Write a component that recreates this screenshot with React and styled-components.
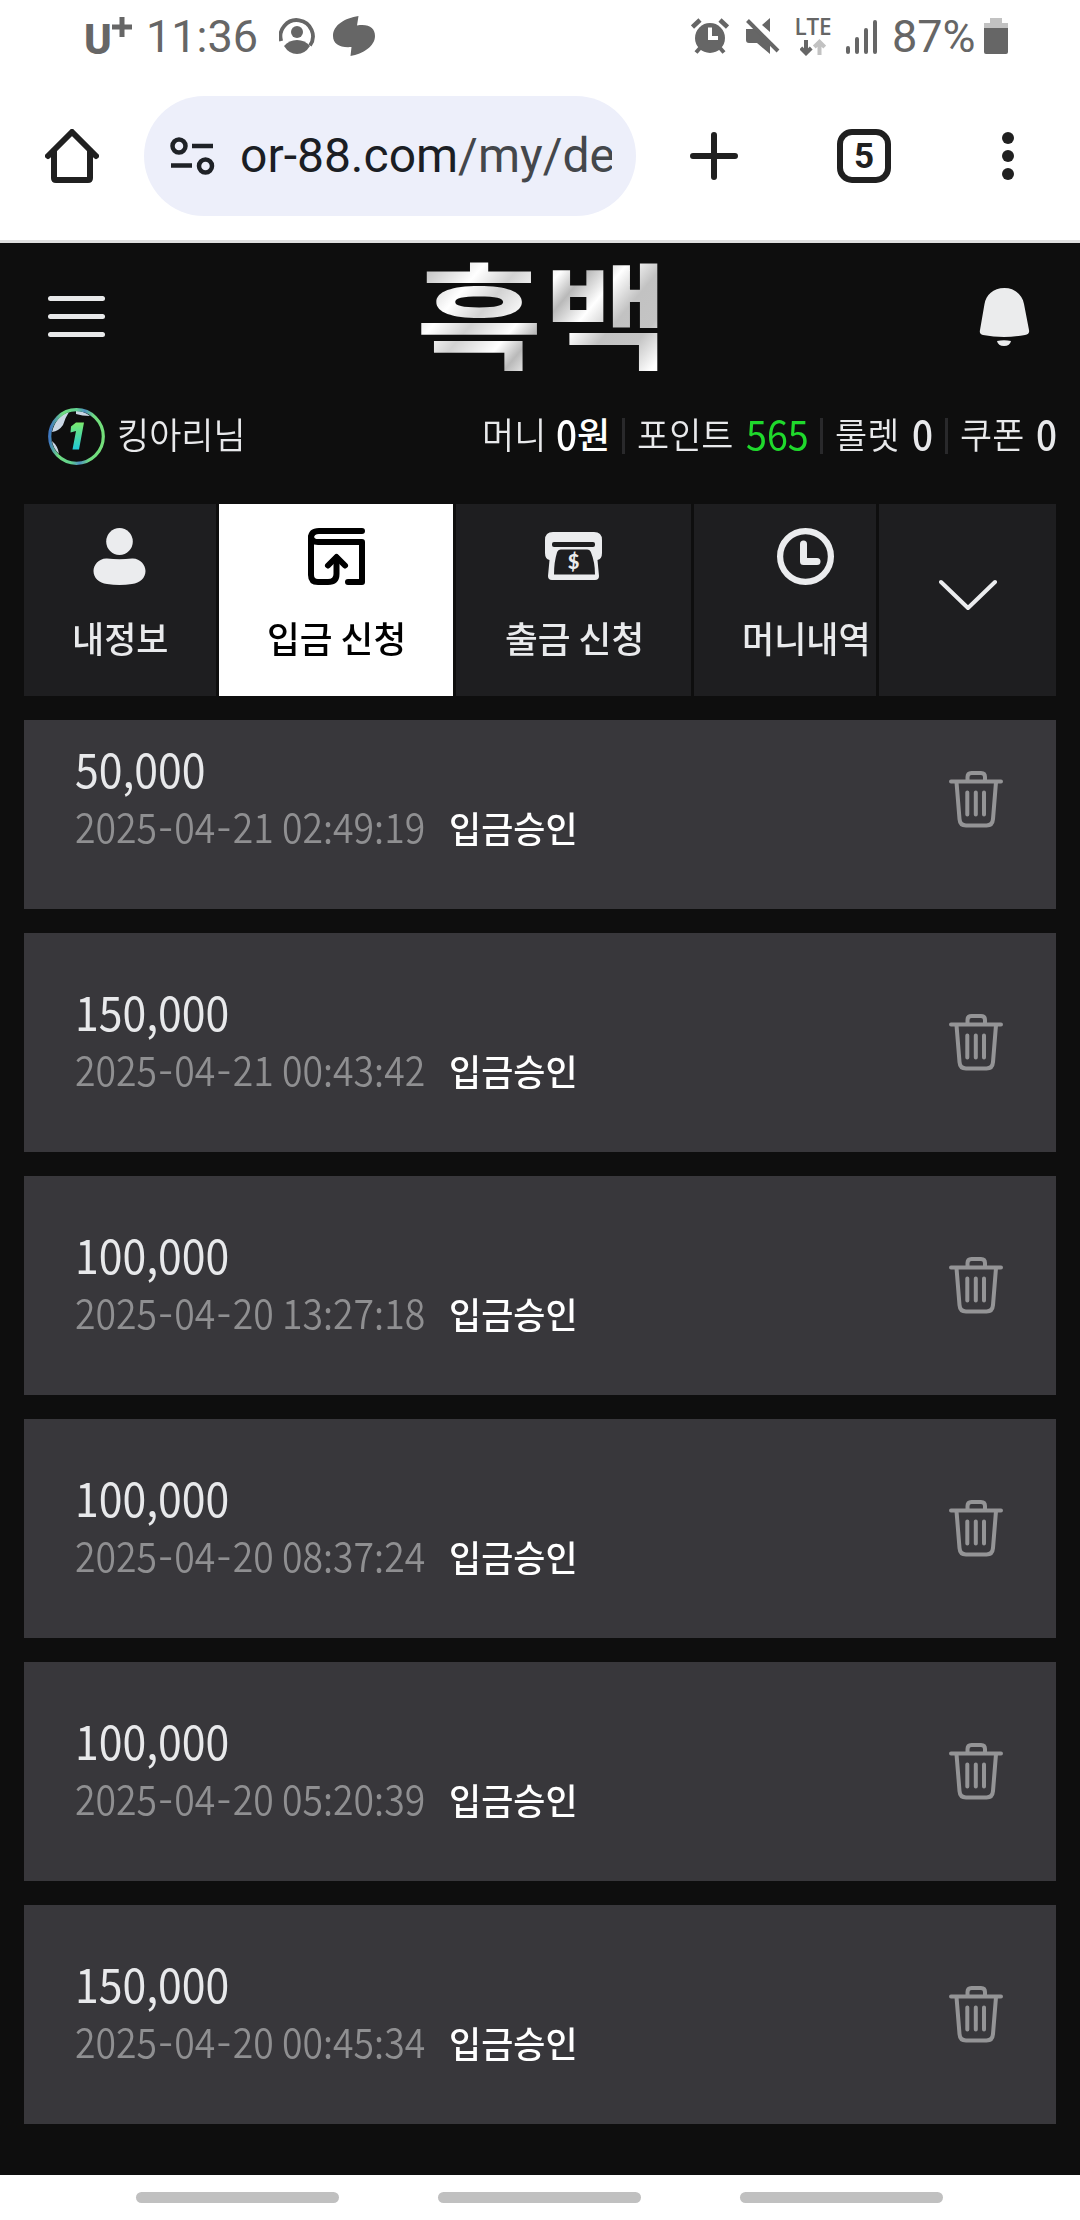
import React from "react";
import styled, { createGlobalStyle } from "styled-components";

const Global = createGlobalStyle`
  * { box-sizing: border-box; }
  body { margin: 0; background: #fff; }
`;

const KR = `"Noto Sans CJK KR", sans-serif`;

const Screen = styled.div`
  width: 1080px;
  height: 2220px;
  display: flex;
  flex-direction: column;
  background: #fff;
  overflow: hidden;
  font-family: ${KR};
`;

/* ---------- status bar ---------- */
const StatusBar = styled.header`
  height: 80px;
  display: flex;
  justify-content: space-between;
  align-items: flex-start;
  padding: 14px 72px 0 84px;
  color: #666;
  font-family: Roboto, sans-serif;
`;
const StatusGroup = styled.div`
  display: flex;
  align-items: flex-start;
  height: 46px;
`;
const Carrier = styled.div`
  display: flex;
  width: 48px;
  margin-right: 14px;
  font: 800 42px/46px Roboto, sans-serif;
  padding-top: 3px;
`;
const StatusText = styled.span`
  display: block;
  width: ${(p) => p.$w}px;
  margin-left: ${(p) => p.$ml || 0}px;
  font-size: 45px;
  line-height: 46px;
  white-space: nowrap;
`;
const NetStack = styled.div`
  display: flex;
  flex-direction: column;
  align-items: center;
  width: 36px;
  margin-left: 15px;
  font: 600 22.5px/22px "Open Sans", sans-serif;
  padding-top: 2px;
  letter-spacing: -0.2px;
`;
const Icon = styled.svg`
  display: block;
  flex: none;
  margin-left: ${(p) => p.$ml || 0}px;
  margin-top: ${(p) => p.$mt || 0}px;
`;

/* ---------- browser toolbar ---------- */
const Toolbar = styled.div`
  height: 163px;
  border-bottom: 3px solid #dedfde;
  display: flex;
  align-items: flex-start;
  padding: 16px 42px 0 42px;
`;
const ToolButton = styled.div`
  flex: none;
  height: 120px;
  width: 60px;
  display: flex;
  align-items: center;
  justify-content: center;
  margin-left: ${(p) => p.$ml || 0}px;
`;
const UrlPill = styled.div`
  flex: none;
  width: 492px;
  height: 120px;
  margin-left: 42px;
  border-radius: 60px;
  background: #edeffa;
  display: flex;
  align-items: center;
  padding: 0 24px 0 26px;
`;
const UrlText = styled.div`
  flex: 1;
  margin-left: 25px;
  overflow: hidden;
  white-space: nowrap;
  font: 400 48px/60px Roboto, sans-serif;
  color: #1b1e24;
  span { color: #44474b; }
`;
const TabCount = styled.div`
  width: 54px;
  height: 54px;
  border: 6px solid #202020;
  border-radius: 15px;
  font: 700 35px/43px Roboto, sans-serif;
  color: #202020;
  text-align: center;
`;

/* ---------- site ---------- */
const Site = styled.main`
  height: 1932px;
  background: #0e0e0e;
  overflow: hidden;
  color: #e8e9eb;
  display: flex;
  flex-direction: column;
`;
const SiteHeader = styled.div`
  height: 147px;
  display: flex;
  justify-content: space-between;
  align-items: center;
  padding: 0 48px;
`;
const Burger = styled.div`
  width: 57px;
  display: flex;
  flex-direction: column;
  gap: 13px;
  i { height: 5px; border-radius: 3px; background: #e8e9ea; }
`;
const Logo = styled.h1`
  margin: 0 0 12px 6px;
  padding: 0 4px;
  text-align: center;
  font: 700 115px/133px ${KR};
  white-space: nowrap;
  color: transparent;
  transform: scaleX(1.2);
  background: linear-gradient(125deg, #c4c4c4 10%, #fff 24%, #d2d2d2 34%, #fff 46%, #b9b9b9 53%, #fff 62%, #c2c2c2 72%, #c4c4c4 82%, #fff 92%);
  -webkit-background-clip: text;
  background-clip: text;
`;
const UserRow = styled.div`
  height: 114px;
  padding: 18px 24px 0 48px;
  display: flex;
  align-items: flex-start;
`;
const Fit = styled.span`
  display: block;
  flex: none;
  width: ${(p) => p.$w}px;
  margin-left: ${(p) => p.$ml || 0}px;
  margin-top: ${(p) => p.$mt || 0}px;
  font-size: ${(p) => p.$size || 36}px;
  font-weight: ${(p) => p.$weight || 400};
  line-height: 50px;
  color: ${(p) => p.$color || "inherit"};
  white-space: nowrap;
  transform: scaleX(${(p) => p.$sx || 0.97});
  transform-origin: 0 50%;
`;
const Stats = styled.div`
  display: flex;
  margin-left: auto;
  width: 573px;
`;
const Divider = styled.i`
  flex: none;
  width: 3px;
  height: 36px;
  margin: 10px 0 0 ${(p) => p.$ml}px;
  background: #29292b;
`;

const TabBar = styled.nav`
  height: 192px;
  margin: 0 24px;
  display: flex;
  gap: 3px;
`;
const Tab = styled.div`
  flex: none;
  width: ${(p) => p.$w}px;
  height: 192px;
  padding: 24px 0 0 ${(p) => p.$pad || 0}px;
  overflow: hidden;
  background: ${(p) => (p.$active ? "#fff" : "#1e1e20")};
  color: ${(p) => (p.$active ? "#000" : "#e9eaec")};
  display: flex;
  flex-direction: column;
  align-items: ${(p) => (p.$pad ? "flex-start" : "center")};
`;
const TabIcon = styled.div`
  height: 57px;
  width: 57px;
  margin-left: ${(p) => p.$ml || 0}px;
  margin-bottom: 27px;
`;
const MoreTab = styled(Tab)`
  padding: 0;
  justify-content: center;
`;

const List = styled.section`
  flex: 1;
  margin: 24px 24px 0;
  overflow: hidden;
`;
const Card = styled.article`
  height: 219px;
  margin-top: ${(p) => (p.$first ? -30 : 24)}px;
  padding: 53px 53px 0 51px;
  background: #38373b;
  display: flex;
  justify-content: space-between;
`;
const CardLine = styled.div`
  display: flex;
  height: ${(p) => p.$h}px;
`;
const Dash = styled.span`
  display: inline-block;
  width: 19px;
  text-align: center;
  transform: translateY(-2px) scaleX(1.15);
`;

const NavBar = styled.footer`
  height: 45px;
  display: flex;
  gap: 99px;
  padding: 17px 0 0 136px;
  i { width: 203px; height: 11px; border-radius: 6px; background: #c0c0c0; }
`;

const Trash = () => (
  <Icon width="54" height="58" viewBox="0 0 54 58" $mt={27} fill="none" stroke="#949496" strokeWidth="4" strokeLinecap="round" strokeLinejoin="round">
    <path d="M2 11.5H52" />
    <path d="M18.5 11V7Q18.5 3 22.500 3H32Q36 3 36 7V11" />
    <path d="M7.500 12L10.500 49Q11 55.500 17 55.500H37.500Q43.500 55.500 44 49L47 12" />
    <path d="M18.300 22.500V44.500M26.800 22.500V44.500M35 22.500V44.500" />
  </Icon>
);

const Stamp = ({ value }) => {
  const [y, m, rest] = value.split("-");
  return (
    <Fit $w={374} $size={41} $sx={0.911} $weight={350} $color="#8f8f91">
      {y}<Dash>-</Dash>{m}<Dash>-</Dash>{rest}
    </Fit>
  );
};

const rows = [
  ["50,000", "2025-04-21 02:49:19"],
  ["150,000", "2025-04-21 00:43:42"],
  ["100,000", "2025-04-20 13:27:18"],
  ["100,000", "2025-04-20 08:37:24"],
  ["100,000", "2025-04-20 05:20:39"],
  ["150,000", "2025-04-20 00:45:34"],
];

export default function App() {
  return (
    <Screen>
      <Global />
      <StatusBar>
        <StatusGroup>
          <Carrier>
            U
            <Icon width="20" height="20" viewBox="0 0 20 20" fill="none" stroke="#666" strokeWidth="5"><path d="M10 0V20M0 10H20" /></Icon>
          </Carrier>
          <StatusText $w={133}>11:36</StatusText>
          <Icon width="36" height="36" viewBox="0 0 36 36" $mt={4}>
            <path d="M2.200 23A16.200 16.200 0 1 1 31 27.500" fill="none" stroke="#666" strokeWidth="3.800" />
            <circle cx="18" cy="14" r="6" fill="#666" />
            <path d="M5 28Q10 22 18 22T31 28Q26 36 18 36T5 28Z" fill="#666" />
          </Icon>
          <Icon width="42" height="40" viewBox="0 0 42 40" $ml={18} $mt={2} fill="#666">
            <path d="M25.500 0L24 9.500C36 7.500 42 12 42 20C42 30 30 38 17.500 40L18.500 31C7 32 0 28 0 20C0 9 12 2 25.500 0Z" />
          </Icon>
        </StatusGroup>
        <StatusGroup>
          <Icon width="38" height="36" viewBox="0 0 38 36" $mt={4} fill="#666" stroke="#666">
            <circle cx="19" cy="20" r="15" stroke="none" />
            <path d="M1.500 9L9 2M29 2L36.500 9" strokeWidth="4.600" />
            <path d="M9 30L5 34.500M29 30L33 34.500" strokeWidth="4" />
            <path d="M19 9.500V20H27" fill="none" stroke="#fff" strokeWidth="4" />
          </Icon>
          <Icon width="34" height="36" viewBox="0 0 34 36" $ml={17} $mt={4} fill="#666">
            <path d="M0 11H11L24 24V36L11 25H3Q0 25 0 22ZM24 0V14L16 7Z" />
            <path d="M3 1L34 32" stroke="#fff" strokeWidth="4" />
            <path d="M1.500 2.500L32 33" stroke="#666" strokeWidth="4" />
          </Icon>
          <NetStack>
            LTE
            <Icon width="26" height="17" viewBox="0 0 26 17" fill="none" strokeWidth="4" $mt={1}>
              <path d="M6 1V14M0.800 9L6 14.200L11.200 9" stroke="#666" />
              <path d="M19.500 16V3M14.300 8L19.500 2.800L24.700 8" stroke="#c2c2c2" />
            </Icon>
          </NetStack>
          <Icon width="31" height="36" viewBox="0 0 31 36" $ml={15} $mt={4} stroke="#666" strokeWidth="4" strokeLinecap="round">
            <path d="M2 30V34M11 21V34M20 12V34M29 4V34" />
          </Icon>
          <StatusText $w={92} $ml={15}>87%</StatusText>
          <Icon width="24" height="36" viewBox="0 0 24 36" $mt={4}>
            <path d="M6 5V0H18V5H24V10H0V5Z" fill="#c2c2c2" />
            <path d="M0 10H24V34Q24 36 22 36H2Q0 36 0 34Z" fill="#666" />
          </Icon>
        </StatusGroup>
      </StatusBar>

      <Toolbar>
        <ToolButton>
          <Icon width="54" height="54" viewBox="0 0 54 54" fill="none" stroke="#202020" strokeWidth="6" strokeLinecap="round" strokeLinejoin="round">
            <path d="M3 27L27 3L51 27" />
            <path d="M9 22V49Q9 51 11 51H43Q45 51 45 49V22" />
          </Icon>
        </ToolButton>
        <UrlPill>
          <Icon width="45" height="38" viewBox="0 0 45 38" fill="none" stroke="#1f2227" strokeWidth="4.500">
            <circle cx="9" cy="9" r="6.500" />
            <circle cx="35.500" cy="29" r="6.500" />
            <path d="M22 9H43M1 28.500H22" />
          </Icon>
          <UrlText>or-88.com<span>/my/de</span></UrlText>
        </UrlPill>
        <ToolButton $ml={48}>
          <Icon width="48" height="48" viewBox="0 0 48 48" stroke="#202020" strokeWidth="6" strokeLinecap="round"><path d="M24 3V45M3 24H45" /></Icon>
        </ToolButton>
        <ToolButton $ml={90}><TabCount>5</TabCount></ToolButton>
        <ToolButton $ml={84}>
          <Icon width="12" height="48" viewBox="0 0 12 48" fill="#202020"><circle cx="6" cy="6" r="6" /><circle cx="6" cy="24" r="6" /><circle cx="6" cy="42" r="6" /></Icon>
        </ToolButton>
      </Toolbar>

      <Site>
        <SiteHeader>
          <Burger><i /><i /><i /></Burger>
          <Logo>흑백</Logo>
          <Icon width="57" height="58" viewBox="3 0 57 58" fill="#ebeced">
            <path d="M32.500 0C43 0 50.500 7 52 16L57 42Q58 46 53 47Q32 51 11 47Q7 46 8 42L12.500 16C14 7 21 0 32.500 0Z" />
            <path d="M25 53Q32 51.500 39 53Q38 58 32 58T25 53Z" />
          </Icon>
        </SiteHeader>

        <UserRow>
          <Icon width="57" height="57" viewBox="0 0 57 57">
            <defs>
              <linearGradient id="ring" x1="0" y1="0.500" x2="1" y2="0.600"><stop offset="0" stopColor="#3f78c0" /><stop offset="0.200" stopColor="#6fdc80" /><stop offset="0.450" stopColor="#5fcf90" /><stop offset="0.600" stopColor="#4d8fc0" /><stop offset="0.780" stopColor="#6fdc80" /><stop offset="1" stopColor="#74e07a" /></linearGradient>
              <linearGradient id="one" x1="0" y1="0" x2="0" y2="1"><stop offset="0" stopColor="#7bea6c" /><stop offset="1" stopColor="#1fc9d8" /></linearGradient>
            </defs>
            <path d="M4 24Q8 8 21 4Q17 10 15 17Q11 23 4 24ZM28 3Q36 3 42 8Q34 8 28 6ZM4 33Q10 38 11 46Q5 40 4 33Z" fill="#c9d6e4" />
            <circle cx="28.500" cy="28.500" r="26.800" fill="none" stroke="url(#ring)" strokeWidth="3.200" />
            <path d="M28 14.500H36L31 41.500H24.500L28 23L22.500 24.500L23 18.500Z" fill="url(#one)" />
          </Icon>
          <Fit $ml={12} $w={130} $weight={350}>킹아리님</Fit>
          <Stats>
            <Fit $w={74} $ml={-1} $weight={350}>머니</Fit>
            <Fit $w={21} $size={41} $sx={0.9} $weight={500} $color="#fff" $mt={-1}>0</Fit>
            <Fit $w={32} $weight={500} $sx={1} $color="#fff">원</Fit>
            <Divider $ml={13} />
            <Fit $ml={12} $w={109} $weight={350}>포인트</Fit>
            <Fit $w={63} $size={41} $sx={0.92} $color="#1fd92c" $mt={-1}>565</Fit>
            <Divider $ml={11} />
            <Fit $ml={12} $w={77} $weight={350}>룰렛</Fit>
            <Fit $w={20} $size={41} $sx={0.9} $weight={500} $mt={-1}>0</Fit>
            <Divider $ml={13} />
            <Fit $ml={12} $w={76} $weight={350}>쿠폰</Fit>
            <Fit $w={20} $size={41} $sx={0.9} $weight={500} $mt={-1}>0</Fit>
          </Stats>
        </UserRow>

        <TabBar>
          <Tab $w={192}>
            <TabIcon>
              <Icon width="57" height="57" viewBox="0 0 57 57" fill="#ebecee">
                <ellipse cx="27.500" cy="13.500" rx="13.300" ry="13.500" />
                <path d="M15 30.500Q27.500 32 40 30.500C48 30 53.500 37 53.500 43C53.500 50 48 55 40 56Q27.500 58 15 56C7 55 1.500 50 1.500 43C1.500 37 7 30 15 30.500Z" />
              </Icon>
            </TabIcon>
            <Fit $w={96} $weight={500}>내정보</Fit>
          </Tab>
          <Tab $w={234} $active>
            <TabIcon>
              <Icon width="57" height="57" viewBox="0 0 57 57" fill="none" stroke="#000" strokeWidth="6" strokeLinecap="round" strokeLinejoin="round">
                <path d="M54 3H11Q3 3 3 10V47Q3 54 10 54H20Q28.500 54 28.500 46V30" />
                <path d="M3 9Q4 14 10 14H54V54H40" />
                <path d="M20 37.500L28.500 29L37 37.500" />
              </Icon>
            </TabIcon>
            <Fit $w={138} $sx={0.99} $weight={500}>입금 신청</Fit>
          </Tab>
          <Tab $w={235}>
            <TabIcon>
              <Icon width="57" height="57" viewBox="0 0 57 57">
                <path d="M8 4H49Q57 4 57 12V25Q57 31 52.500 32L54 48Q54 52 50 52H7Q3 52 3 48L4.500 32Q0 31 0 25V12Q0 4 8 4Z" fill="#ebecee" />
                <rect x="7" y="14" width="43" height="5" rx="2" fill="#1e1e20" />
                <path d="M16 21.500H42Q45 21.500 46 24.500Q50 34 50 46.500H9Q9 34 12 24.500Q13 21.500 16 21.500Z" fill="#1e1e20" />
                <text x="28.500" y="41" textAnchor="middle" fontFamily="Lato, sans-serif" fontWeight="900" fontSize="20" fill="#ebecee">$</text>
              </Icon>
            </TabIcon>
            <Fit $w={138} $sx={0.99} $weight={500}>출금 신청</Fit>
          </Tab>
          <Tab $w={182} $pad={48}>
            <TabIcon $ml={35}>
              <Icon width="57" height="57" viewBox="0 0 57 57" fill="none" stroke="#ebecee" strokeLinecap="round" strokeLinejoin="round">
                <circle cx="28.500" cy="28.500" r="25.400" strokeWidth="6.200" />
                <path d="M26.500 16V33.500H40" strokeWidth="7" />
              </Icon>
            </TabIcon>
            <Fit $w={124} $weight={500}>머니내역</Fit>
          </Tab>
          <MoreTab $w={177}>
            <Icon width="58" height="33" viewBox="0 0 58 33" $mt={-9} $ml={1} fill="none" stroke="#ebecee" strokeWidth="4" strokeLinecap="round" strokeLinejoin="round"><path d="M2 3L29 29L56 3" /></Icon>
          </MoreTab>
        </TabBar>

        <List>
          {rows.map(([amount, date], i) => (
            <Card key={date} $first={i === 0}>
              <div>
                <CardLine $h={57}><Fit $w={160} $size={47} $sx={0.91}>{amount}</Fit></CardLine>
                <CardLine $h={58}>
                  <Stamp value={date} />
                  <Fit $w={130} $mt={2} $weight={500} $color="#fff">입금승인</Fit>
                </CardLine>
              </div>
              <Trash />
            </Card>
          ))}
        </List>
      </Site>
      <NavBar><i /><i /><i /></NavBar>
    </Screen>
  );
}
